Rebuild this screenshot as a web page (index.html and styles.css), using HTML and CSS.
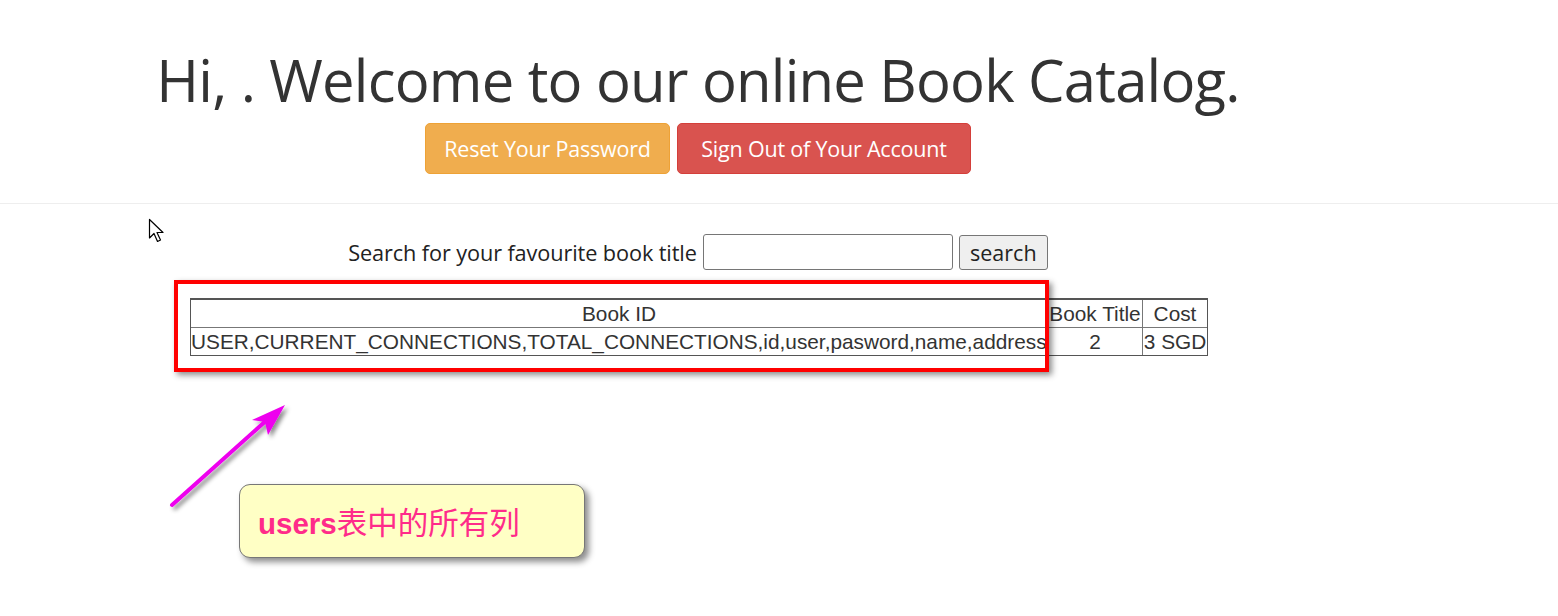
FILE: index.html
```html
<!DOCTYPE html>
<html>
<head>
<meta charset="utf-8">
<link rel="stylesheet" href="styles.css">
</head>
<body>
<div class="page">
  <header class="hero">
    <h1 class="title">Hi, . Welcome to our online Book Catalog.</h1>
    <div class="actions">
      <a class="btn btn-warning">Reset Your Password</a>
      <a class="btn btn-danger">Sign Out of Your Account</a>
    </div>
  </header>
  <hr class="divider">
  <main class="content">
    <form class="search">
      <label class="search-label">Search for your favourite book title</label>
      <input class="search-input" type="text">
      <button class="search-btn" type="button">search</button>
    </form>
    <table class="books">
      <tr><td class="c-id">Book ID</td><td class="c-title">Book Title</td><td class="c-cost">Cost</td></tr>
      <tr><td class="c-id">USER,CURRENT_CONNECTIONS,TOTAL_CONNECTIONS,id,user,pasword,name,address</td><td class="c-title">2</td><td class="c-cost">3 SGD</td></tr>
    </table>
  </main>
</div>

<svg class="cursor" width="20" height="28" viewBox="0 0 20 28">
  <path d="M1.5 1.5 L1.5 20 L6 15.5 L9.5 23.5 L12.5 22 L9 14.5 L15 14.5 Z" fill="#fff" stroke="#000" stroke-width="1.2" stroke-linejoin="round"/>
</svg>
<div class="highlight"></div>
<svg class="arrow" width="140" height="130" viewBox="0 0 140 130">
  <defs>
    <filter id="sh" x="-20%" y="-20%" width="150%" height="150%">
      <feDropShadow dx="3" dy="3" stdDeviation="2" flood-color="#000" flood-opacity="0.45"/>
    </filter>
  </defs>
  <g filter="url(#sh)">
    <line x1="10" y1="113" x2="106" y2="27" stroke="#ee00ee" stroke-width="4" stroke-linecap="round"/>
    <path d="M123 13 L90 28 L103 30 L106 43 Z" fill="#ee00ee"/>
  </g>
</svg>
<div class="callout"><b>users</b>表中的所有列</div>
</body>
</html>
```
FILE: styles.css
```css
html, body { margin: 0; padding: 0; background: #fff; }
body { font-family: "Open Sans", "Noto Sans", sans-serif; color: #333; }
.page { width: 100%; }
.hero { width: 1396px; text-align: center; padding-top: 40px; }
.title {
  margin: 0;
  font-family: "Open Sans", sans-serif;
  font-weight: 400;
  font-size: 58px;
  line-height: 80px;
  color: #333;
  letter-spacing: -0.8px;
}
.actions { display: flex; justify-content: center; gap: 7px; margin-top: 3px; }
.btn {
  display: inline-block;
  height: 51px;
  box-sizing: border-box;
  padding: 0;
  border-radius: 5px;
  color: #fff;
  font-size: 21.5px;
  line-height: 49px;
  letter-spacing: -0.2px;
  border: 1px solid transparent;
}
.btn-warning { background: #f0ad4e; border-color: #eea236; width: 245px; }
.btn-danger { background: #d9534f; border-color: #d43f3a; width: 294px; }
.divider { margin: 29px 0 0 0; border: 0; border-top: 1px solid #eee; height: 0; }
.content { width: 1396px; text-align: center; padding-top: 30px; }
.search { display: flex; justify-content: center; align-items: center; gap: 6px; height: 36px; }
.search-label { font-size: 21.7px; color: #222; letter-spacing: -0.1px; }
.search-input { width: 250px; height: 36px; box-sizing: border-box; border: 1px solid #767676; border-radius: 3px; margin: 0; }
.search-btn { width: 89px; height: 35px; box-sizing: border-box; border: 1px solid #767676; border-radius: 3px; background: #efefef; font-family: "Open Sans", sans-serif; font-size: 21.5px; color: #222; padding: 0; }
.books {
  margin: 28px 0 0 190px;
  border-collapse: separate;
  border-spacing: 0;
  border: 1px solid #555;
  border-top-width: 2px;
  font-family: "Liberation Sans", Arial, sans-serif;
  font-size: 20.8px;
  color: #333;
  table-layout: fixed;
  width: 1017px;
}
.books td { border: 0; padding: 0; height: 27px; line-height: 27px; white-space: nowrap; overflow: hidden; }
.books tr:first-child td { border-bottom: 1px solid #777; }
.books td + td { border-left: 1px solid #777; }
.books td.c-id { width: 856px; }
.books tr:last-child td.c-id { text-align: left; }
.books td.c-title { width: 94px; }
.books td.c-cost { width: 64px; }

.cursor { position: absolute; left: 148px; top: 218px; }
.highlight {
  position: absolute; left: 174px; top: 280px; width: 867px; height: 84px;
  border: 4px solid #ff0000;
  box-shadow: 3px 3px 6px rgba(0,0,0,0.45);
}
.arrow { position: absolute; left: 162px; top: 392px; }
.callout {
  position: absolute; left: 239px; top: 484px; width: 346px; height: 74px;
  box-sizing: border-box;
  background: #ffffc5;
  border: 1px solid #777;
  border-radius: 11px;
  box-shadow: 4px 4px 6px rgba(0,0,0,0.45);
  padding: 17px 0 0 18px;
  font-family: "Noto Sans CJK SC", sans-serif;
  font-size: 30.5px;
  line-height: 38px;
  color: #ff2b8a;
}
.callout b { font-family: "Liberation Sans", Arial, sans-serif; font-weight: 700; font-size: 29.5px; }
```
